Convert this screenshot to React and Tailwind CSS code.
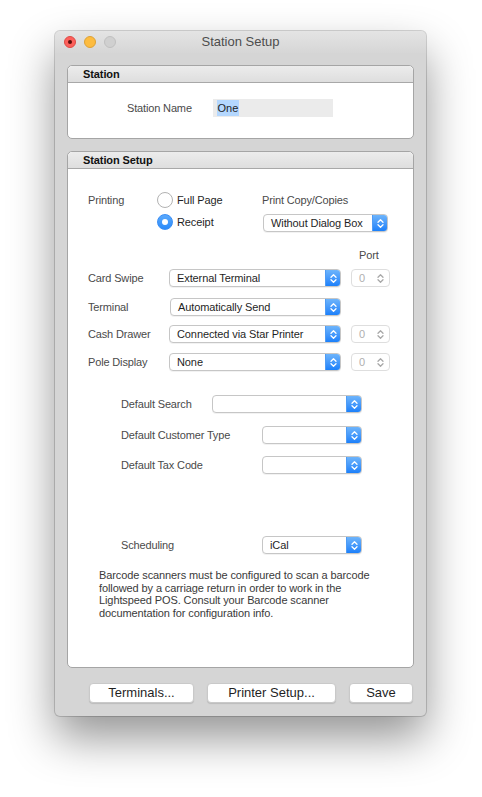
import React from "react";

function Chevrons({ color = "#ffffff" }) {
  return (
    <svg width="7" height="11" viewBox="0 0 7 11" fill="none">
      <path d="M1 4.2 L3.5 1.7 L6 4.2" stroke={color} strokeWidth="1.3" strokeLinecap="round" strokeLinejoin="round" />
      <path d="M1 6.8 L3.5 9.3 L6 6.8" stroke={color} strokeWidth="1.3" strokeLinecap="round" strokeLinejoin="round" />
    </svg>
  );
}

function Popup({ widthClass, text, className = "" }) {
  return (
    <div
      className={`flex h-[18px] rounded-[4px] bg-white border border-[#c6c6c6] shadow-[0_1px_0_rgba(0,0,0,0.05)] overflow-hidden shrink-0 ${widthClass} ${className}`}
    >
      <div className="flex-1 flex items-center pl-[7px] text-[11px] text-[#1f1f1f] tracking-[-0.1px] whitespace-nowrap">
        {text}
      </div>
      <div className="w-[15px] flex items-center justify-center bg-gradient-to-b from-[#6db4fb] to-[#1a80fa] border-l border-[#4f9cf5]">
        <Chevrons />
      </div>
    </div>
  );
}

function Stepper() {
  return (
    <div className="flex items-center justify-between w-[39px] h-[18px] rounded-[4px] bg-white border border-[#dedede] pl-[7px] pr-[5px] shrink-0">
      <span className="text-[11px] text-[#b0b0b0]">0</span>
      <Chevrons color="#a8a8a8" />
    </div>
  );
}

function Radio({ checked, label }) {
  return (
    <div className="flex items-center h-[16px]">
      {checked ? (
        <div className="w-[16px] h-[16px] rounded-full bg-gradient-to-b from-[#5aa9fc] to-[#2a8bfa] border border-[#3a8ef5] flex items-center justify-center">
          <div className="w-[6px] h-[6px] rounded-full bg-white" />
        </div>
      ) : (
        <div className="w-[16px] h-[16px] rounded-full bg-white border border-[#b2b2b2]" />
      )}
      <span className="ml-[4px] text-[11px] text-[#1f1f1f] tracking-[-0.1px]">{label}</span>
    </div>
  );
}

function Label({ className = "", children }) {
  return (
    <div className={`text-[11px] text-[#4a4a4a] tracking-[-0.15px] whitespace-nowrap shrink-0 ${className}`}>
      {children}
    </div>
  );
}

function BoxHeader({ title }) {
  return (
    <div className="h-[17px] flex items-center pl-[15px] bg-gradient-to-b from-[#ececec] to-[#dedede] border-b border-[#a8a8a8] rounded-t-[5px]">
      <span className="text-[11px] font-bold text-[#111] tracking-[-0.1px]">{title}</span>
    </div>
  );
}

function Button({ widthClass, children }) {
  return (
    <div
      className={`h-[20px] flex items-center justify-center rounded-[4px] bg-white border border-[#c9c9c9] shadow-[0_1px_1px_rgba(0,0,0,0.12)] text-[13px] text-[#1f1f1f] ${widthClass}`}
    >
      {children}
    </div>
  );
}

export default function App() {
  return (
    <div className="w-[482px] h-[797px] bg-white pl-[55px] pt-[31px] font-['Liberation_Sans',Arial,sans-serif]">
      <div className="w-[371px] h-[685px] rounded-[5px] bg-[#d5d5d5] shadow-[0_22px_45px_rgba(0,0,0,0.42),0_0_0_1px_rgba(0,0,0,0.16)] flex flex-col">
        {/* Title bar */}
        <div className="relative h-[22px] flex items-center rounded-t-[5px] bg-gradient-to-b from-[#e4e4e4] to-[#d6d6d6]">
          <div className="flex items-center gap-[8px] pl-[9px]">
            <div className="w-[12px] h-[12px] rounded-full bg-[#fc605b] border border-[#de4a45] flex items-center justify-center">
              <div className="w-[4px] h-[4px] rounded-full bg-[#5a0e0b]" />
            </div>
            <div className="w-[12px] h-[12px] rounded-full bg-[#fdbc40] border border-[#dea235]" />
            <div className="w-[12px] h-[12px] rounded-full bg-[#d0d0d0] border border-[#c0c0c0]" />
          </div>
          <div className="absolute inset-0 flex items-center justify-center text-[13px] text-[#4d4d4d] pointer-events-none">
            Station Setup
          </div>
        </div>

        <div className="flex flex-col px-[12px] pt-[12px]">
          {/* Station box */}
          <div className="h-[74px] rounded-[5px] border border-[#a5a5a5] bg-white flex flex-col">
            <BoxHeader title="Station" />
            <div className="flex items-start pt-[16px] pl-[59px]">
              <Label className="w-[86px] h-[18px] flex items-center">Station Name</Label>
              <div className="w-[120px] h-[18px] bg-[#ebebeb] flex items-center pl-[4px]">
                <span className="bg-[#b4d7fe] text-[11px] text-[#1f1f1f] leading-[16px] px-[0.5px]">One</span>
              </div>
            </div>
          </div>

          {/* Station Setup box */}
          <div className="mt-[12px] h-[517px] rounded-[5px] border border-[#a5a5a5] bg-white flex flex-col">
            <BoxHeader title="Station Setup" />
            <div className="flex flex-col pl-[20px]">
              {/* Printing */}
              <div className="flex mt-[23px]">
                <Label className="w-[69px] h-[16px] flex items-center">Printing</Label>
                <div className="flex flex-col w-[105px] gap-[6px]">
                  <Radio label="Full Page" />
                  <Radio checked label="Receipt" />
                </div>
                <div className="flex flex-col gap-[6px]">
                  <Label className="h-[16px] flex items-center">Print Copy/Copies</Label>
                  <Popup widthClass="w-[125px]" className="ml-[1px]" text="Without Dialog Box" />
                </div>
              </div>

              {/* Port */}
              <Label className="mt-[16px] h-[15px] flex items-center ml-[271px]">Port</Label>

              <div className="flex items-center mt-[6px]">
                <Label className="w-[81px]">Card Swipe</Label>
                <Popup widthClass="w-[172px]" text="External Terminal" />
                <div className="ml-[10px]"><Stepper /></div>
              </div>
              <div className="flex items-center mt-[11px]">
                <Label className="w-[82px]">Terminal</Label>
                <Popup widthClass="w-[171px]" text="Automatically Send" />
              </div>
              <div className="flex items-center mt-[9px]">
                <Label className="w-[81px]">Cash Drawer</Label>
                <Popup widthClass="w-[172px]" text="Connected via Star Printer" />
                <div className="ml-[10px]"><Stepper /></div>
              </div>
              <div className="flex items-center mt-[10px]">
                <Label className="w-[81px]">Pole Display</Label>
                <Popup widthClass="w-[172px]" text="None" />
                <div className="ml-[10px]"><Stepper /></div>
              </div>

              {/* Defaults */}
              <div className="flex items-center mt-[24px] ml-[33px]">
                <Label className="w-[91px]">Default Search</Label>
                <Popup widthClass="w-[150px]" text="" />
              </div>
              <div className="flex items-center mt-[13px] ml-[33px]">
                <Label className="w-[141px]">Default Customer Type</Label>
                <Popup widthClass="w-[100px]" text="" />
              </div>
              <div className="flex items-center mt-[12px] ml-[33px]">
                <Label className="w-[141px]">Default Tax Code</Label>
                <Popup widthClass="w-[100px]" text="" />
              </div>

              <div className="flex items-center mt-[62px] ml-[33px]">
                <Label className="w-[141px]">Scheduling</Label>
                <Popup widthClass="w-[100px]" text="iCal" />
              </div>

              <div className="mt-[15px] ml-[11px] text-[11px] leading-[12.5px] text-[#3a3a3a] tracking-[-0.1px] whitespace-nowrap">
                Barcode scanners must be configured to scan a barcode
                <br />
                followed by a carriage return in order to work in the
                <br />
                Lightspeed POS. Consult your Barcode scanner
                <br />
                documentation for configuration info.
              </div>
            </div>
          </div>

          {/* Buttons */}
          <div className="flex items-center mt-[15px] pl-[22px]">
            <Button widthClass="w-[105px]">Terminals...</Button>
            <div className="ml-[13px]">
              <Button widthClass="w-[129px]">Printer Setup...</Button>
            </div>
            <div className="ml-[13px]">
              <Button widthClass="w-[64px]">Save</Button>
            </div>
          </div>
        </div>
      </div>
    </div>
  );
}
